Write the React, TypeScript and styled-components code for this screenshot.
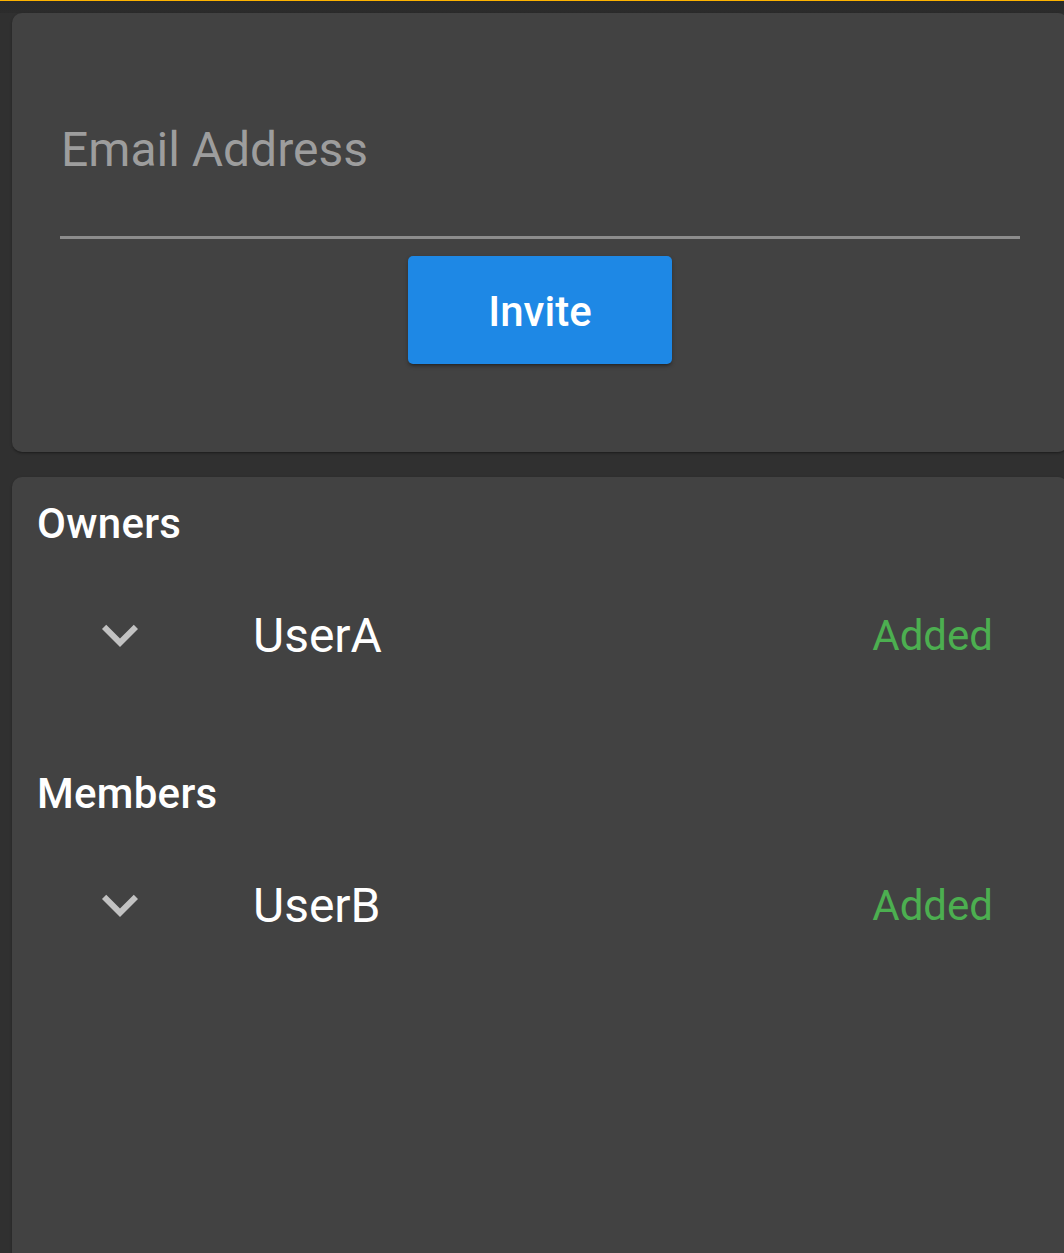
import React from "react";
import styled, { createGlobalStyle } from "styled-components";

const Global = createGlobalStyle`
  html, body {
    margin: 0;
    padding: 0;
    background: #303030;
    overflow: hidden;
    font-family: Roboto, "Noto Sans", "Liberation Sans", sans-serif;
  }
`;

const TopLine = styled.div`
  height: 1px;
  background: #fdb300;
`;

const Page = styled.div`
  width: 1068px;
  padding: 12px 0 0 12px;
  box-sizing: border-box;
  background: linear-gradient(#2b2b2b 0, #2c2c2c 12px, #303030 12px);
  display: flex;
  flex-direction: column;
  gap: 25px;
  height: 1320px;
`;

const Card = styled.div<{ $grow?: boolean }>`
  width: 1056px;
  box-sizing: border-box;
  background: #424242;
  border-radius: 10px;
  box-shadow: 0 2px 2px -1px rgba(0, 0, 0, 0.25), 0 1px 3px rgba(0, 0, 0, 0.2);
  flex-shrink: 0;
  ${(p) => (p.$grow ? "flex: 1;" : "")}
`;

const InviteCard = styled(Card)`
  padding: 109px 48px 88px;
  display: flex;
  flex-direction: column;
  align-items: center;
`;

const Field = styled.div`
  align-self: stretch;
  display: flex;
  flex-direction: column;
  border-bottom: 3px solid #8c8c8c;
  height: 117px;
  box-sizing: border-box;
`;

const Label = styled.label`
  font-size: 48px;
  line-height: 56px;
  color: #9d9d9d;
  padding-left: 1px;
`;

const InviteButton = styled.button`
  margin-top: 17px;
  width: 264px;
  height: 108px;
  border: none;
  border-radius: 5px;
  background: #1e88e5;
  color: #fff;
  font-family: Roboto, "Noto Sans", sans-serif;
  font-weight: 500;
  font-size: 42px;
  padding-top: 4px;
  box-shadow: 0 3px 3px -2px rgba(0, 0, 0, 0.3), 0 2px 4px rgba(0, 0, 0, 0.25);
  cursor: pointer;
`;

const ListCard = styled(Card)`
  padding: 23px 0 0 25px;
  display: flex;
  flex-direction: column;
`;

const Section = styled.section`
  display: flex;
  flex-direction: column;
  & + & {
    margin-top: 80px;
  }
`;

const Heading = styled.h2`
  margin: 0;
  font-size: 42px;
  line-height: 48px;
  font-weight: 500;
  color: #fff;
  letter-spacing: 0.3px;
`;

const Row = styled.div`
  margin-top: 32px;
  height: 110px;
  display: flex;
  align-items: center;
  padding-left: 47px;
  padding-right: 75px;
`;

const IconBox = styled.span`
  width: 72px;
  height: 72px;
  display: flex;
  flex-shrink: 0;
  color: #c2c2c2;
`;

const Name = styled.span`
  margin-left: 97px;
  font-size: 48px;
  color: #fff;
`;

const Status = styled.span`
  margin-left: auto;
  font-size: 42px;
  color: #4caf50;
`;

const Chevron = () => (
  <svg width="72" height="72" viewBox="0 0 24 24" fill="currentColor">
    <path d="M16.59 8.59 12 13.17 7.41 8.59 6 10l6 6 6-6z" />
  </svg>
);

const groups = [
  { title: "Owners", users: [{ name: "UserA", status: "Added" }] },
  { title: "Members", users: [{ name: "UserB", status: "Added" }] },
];

export default function App() {
  return (
    <>
      <Global />
      <TopLine />
      <Page>
        <InviteCard>
          <Field>
            <Label>Email Address</Label>
          </Field>
          <InviteButton>Invite</InviteButton>
        </InviteCard>
        <ListCard $grow>
          {groups.map((g) => (
            <Section key={g.title}>
              <Heading>{g.title}</Heading>
              {g.users.map((u) => (
                <Row key={u.name}>
                  <IconBox>
                    <Chevron />
                  </IconBox>
                  <Name>{u.name}</Name>
                  <Status>{u.status}</Status>
                </Row>
              ))}
            </Section>
          ))}
        </ListCard>
      </Page>
    </>
  );
}
